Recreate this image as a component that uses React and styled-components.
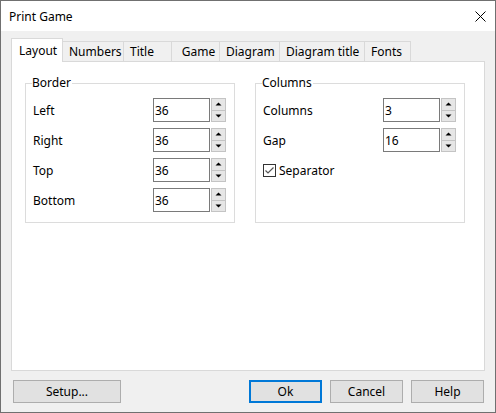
import React from 'react'
import styled, { createGlobalStyle } from 'styled-components'

const GlobalStyle = createGlobalStyle`
    html, body {
        margin: 0;
        padding: 0;
        background: #ffffff;
    }
    body {
        font-family: 'Noto Sans', 'Liberation Sans', sans-serif;
        font-size: 12px;
        color: #000;
    }
`

const Window = styled.div`
    width: 496px;
    height: 413px;
    box-sizing: border-box;
    border: 1px solid #707070;
    background: #f0f0f0;
    display: flex;
    flex-direction: column;
`

const TitleBar = styled.div`
    height: 30px;
    background: #fff;
    display: flex;
    align-items: center;
    justify-content: space-between;
    padding: 0 9px 0 8px;
    flex-shrink: 0;
`

const Body = styled.div`
    flex: 1;
    display: flex;
    flex-direction: column;
    padding: 8px 10px 8px 10px;
`

const TabStrip = styled.div`
    display: flex;
    align-items: flex-end;
    height: 23px;
    margin-bottom: -1px;
    position: relative;
    z-index: 1;
`

const Tab = styled.div`
    box-sizing: border-box;
    width: ${p => p.w}px;
    height: ${p => (p.active ? 24 : 21)}px;
    border: 1px solid #d9d9d9;
    border-bottom: ${p => (p.active ? 'none' : '1px solid #d9d9d9')};
    border-left: ${p => (p.first || p.active ? '1px solid #d9d9d9' : 'none')};
    background: ${p => (p.active ? '#fff' : '#f0f0f0')};
    display: flex;
    align-items: ${p => (p.active ? 'flex-start' : 'center')};
    justify-content: ${p => (p.center ? 'center' : 'flex-start')};
    padding: ${p => (p.active ? '3px 0 0 7px' : '0 0 0 6px')};
    white-space: nowrap;
`

const Panel = styled.div`
    height: 310px;
    box-sizing: border-box;
    background: #fff;
    border: 1px solid #d9d9d9;
    display: flex;
    gap: 20px;
    padding: 13px 0 0 13px;
`

const Group = styled.fieldset`
    margin: 0;
    width: 210px;
    height: 148px;
    box-sizing: border-box;
    border: 1px solid #dcdcdc;
    padding: 7px 0 0 7px;
    display: flex;
    flex-direction: column;
    gap: 6px;

    legend {
        padding: 0 1px 0 0;
        margin-left: -1px;
        line-height: 16px;
    }
`

const Row = styled.div`
    display: flex;
    align-items: center;
    height: 24px;
`

const Label = styled.span`
    width: 120px;
`

const Input = styled.div`
    box-sizing: border-box;
    width: 57px;
    height: 24px;
    border: 1px solid #7a7a7a;
    background: #fff;
    display: flex;
    align-items: center;
    padding-left: 1px;
`

const Spin = styled.div`
    margin-left: 1px;
    width: 15px;
    height: 24px;
    display: flex;
    flex-direction: column;
`

const SpinBtn = styled.div`
    flex: 1;
    box-sizing: border-box;
    background: #e6e6e6;
    border: 1px solid #c4c4c4;
    border-top: ${p => (p.down ? 'none' : '1px solid #c4c4c4')};
    display: flex;
    align-items: center;
    justify-content: center;
`

const Check = styled.div`
    display: flex;
    align-items: center;
    gap: 3px;
`

const Box = styled.div`
    box-sizing: border-box;
    width: 13px;
    height: 13px;
    border: 1px solid #333;
    background: #fff;
    display: flex;
    align-items: center;
    justify-content: center;
`

const Footer = styled.div`
    display: flex;
    gap: 8px;
    margin-top: 9px;
    padding: 0 1px 0 2px;
`

const Button = styled.div`
    box-sizing: border-box;
    width: ${p => p.w}px;
    height: 23px;
    background: #e1e1e1;
    border: ${p => (p.primary ? '2px solid #0078d7' : '1px solid #adadad')};
    display: flex;
    align-items: center;
    justify-content: center;
    margin-right: ${p => (p.push ? 'auto' : '0')};
`

const Arrow = ({ down }) => (
    <svg width="7" height="4" viewBox="0 0 7 4">
        <path d={down ? 'M0.5 0.5 H6.5 L3.5 3.5 Z' : 'M0.5 3.5 H6.5 L3.5 0.5 Z'} fill="#000" />
    </svg>
)

const Spinner = ({ label, value }) => (
    <Row>
        <Label>{label}</Label>
        <Input>{value}</Input>
        <Spin>
            <SpinBtn><Arrow /></SpinBtn>
            <SpinBtn down><Arrow down /></SpinBtn>
        </Spin>
    </Row>
)

const tabs = [
    { t: 'Layout', w: 52, active: true },
    { t: 'Numbers', w: 61 },
    { t: 'Title', w: 48 },
    { t: 'Game', w: 48, center: true },
    { t: 'Diagram', w: 60 },
    { t: 'Diagram title', w: 85 },
    { t: 'Fonts', w: 46 },
]

export default function App() {
    return (
        <>
            <GlobalStyle />
            <Window>
                <TitleBar>
                    <span>Print Game</span>
                    <svg width="11" height="11" viewBox="0 0 11 11">
                        <path d="M0.5 0.5 L10.5 10.5 M10.5 0.5 L0.5 10.5" stroke="#000" strokeWidth="1" />
                    </svg>
                </TitleBar>
                <Body>
                    <TabStrip>
                        {tabs.map((tab, i) => (
                            <Tab key={tab.t} w={tab.w} active={tab.active} first={i === 0} center={tab.center}>
                                {tab.t}
                            </Tab>
                        ))}
                    </TabStrip>
                    <Panel>
                        <Group>
                            <legend>Border</legend>
                            <Spinner label="Left" value="36" />
                            <Spinner label="Right" value="36" />
                            <Spinner label="Top" value="36" />
                            <Spinner label="Bottom" value="36" />
                        </Group>
                        <Group>
                            <legend>Columns</legend>
                            <Spinner label="Columns" value="3" />
                            <Spinner label="Gap" value="16" />
                            <Row>
                                <Check>
                                    <Box>
                                        <svg width="11" height="11" viewBox="0 0 11 11">
                                            <path d="M1.5 5.5 L4 8 L9.5 2.5" stroke="#555" strokeWidth="1.2" fill="none" />
                                        </svg>
                                    </Box>
                                    <span>Separator</span>
                                </Check>
                            </Row>
                        </Group>
                    </Panel>
                    <Footer>
                        <Button w={108} push>Setup...</Button>
                        <Button w={73} primary>Ok</Button>
                        <Button w={73}>Cancel</Button>
                        <Button w={73}>Help</Button>
                    </Footer>
                </Body>
            </Window>
        </>
    )
}
